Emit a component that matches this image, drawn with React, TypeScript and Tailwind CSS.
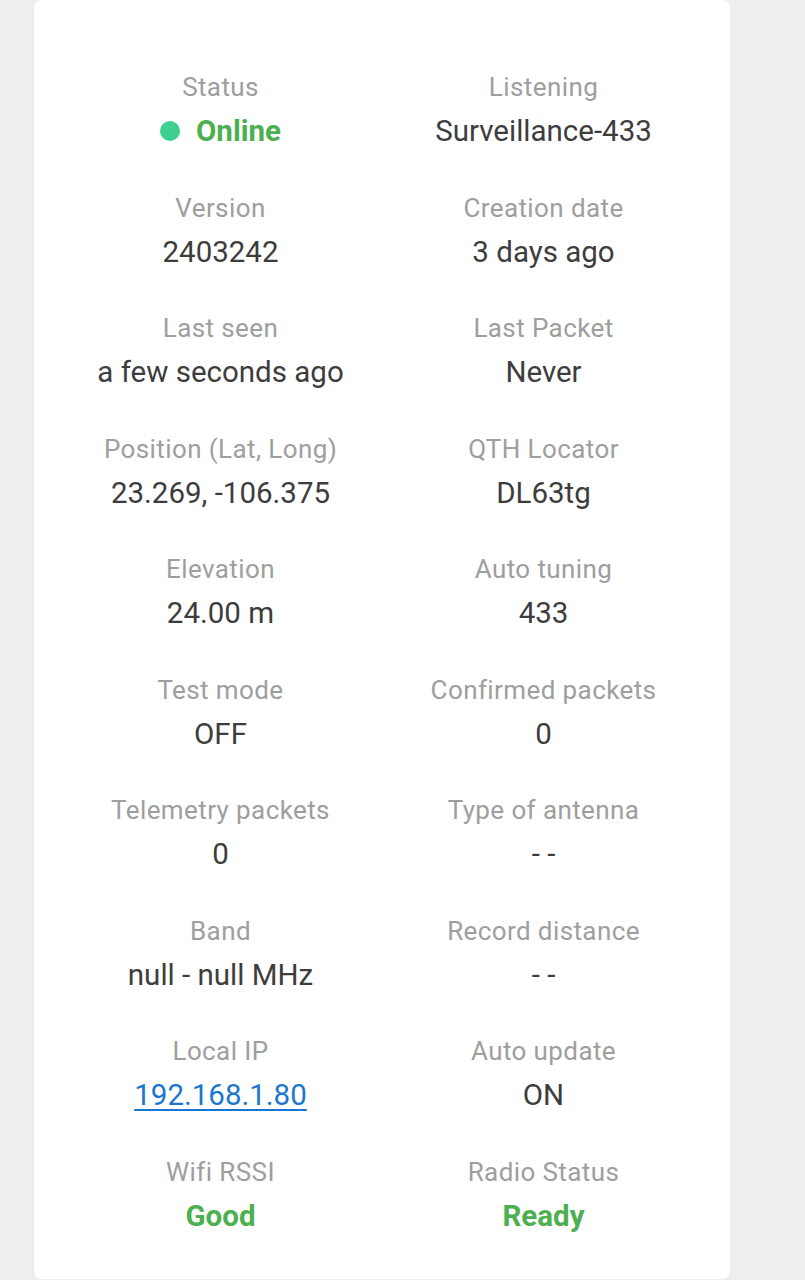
import React from "react";

type Item = {
  label: string;
  value: string;
  kind?: "online" | "green" | "link";
};

const items: Item[] = [
  { label: "Status", value: "Online", kind: "online" },
  { label: "Listening", value: "Surveillance-433" },
  { label: "Version", value: "2403242" },
  { label: "Creation date", value: "3 days ago" },
  { label: "Last seen", value: "a few seconds ago" },
  { label: "Last Packet", value: "Never" },
  { label: "Position (Lat, Long)", value: "23.269, -106.375" },
  { label: "QTH Locator", value: "DL63tg" },
  { label: "Elevation", value: "24.00 m" },
  { label: "Auto tuning", value: "433" },
  { label: "Test mode", value: "OFF" },
  { label: "Confirmed packets", value: "0" },
  { label: "Telemetry packets", value: "0" },
  { label: "Type of antenna", value: "- -" },
  { label: "Band", value: "null - null MHz" },
  { label: "Record distance", value: "- -" },
  { label: "Local IP", value: "192.168.1.80", kind: "link" },
  { label: "Auto update", value: "ON" },
  { label: "Wifi RSSI", value: "Good", kind: "green" },
  { label: "Radio Status", value: "Ready", kind: "green" },
];

function Value({ item }: { item: Item }) {
  if (item.kind === "online") {
    return (
      <div className="flex items-center justify-center gap-4 font-bold text-[#4caf50]">
        <span className="w-5 h-5 rounded-full bg-[#3ecf8e] flex-shrink-0" />
        {item.value}
      </div>
    );
  }
  if (item.kind === "green") {
    return <div className="font-bold text-[#4caf50]">{item.value}</div>;
  }
  if (item.kind === "link") {
    return (
      <a href="#" className="text-[#1976d2] underline underline-offset-[4px]">
        {item.value}
      </a>
    );
  }
  return <div className="text-[#3d3d3d]">{item.value}</div>;
}

export default function App() {
  return (
    <div className="min-h-screen bg-[#eeeeee] font-['Roboto',sans-serif]">
      <div className="ml-[34px] w-[696px] h-[1279px] pt-[71px] px-[25px] bg-white rounded-lg">
        <div className="grid grid-cols-2 gap-y-[42.5px]">
          {items.map((item) => (
            <div key={item.label} className="flex flex-col items-center text-center">
              <p className="text-[26px] leading-[32px] text-[#9e9e9e] tracking-[0.4px]">
                {item.label}
              </p>
              <div className="mt-[10px] text-[29.5px] leading-[36px]">
                <Value item={item} />
              </div>
            </div>
          ))}
        </div>
      </div>
    </div>
  );
}
